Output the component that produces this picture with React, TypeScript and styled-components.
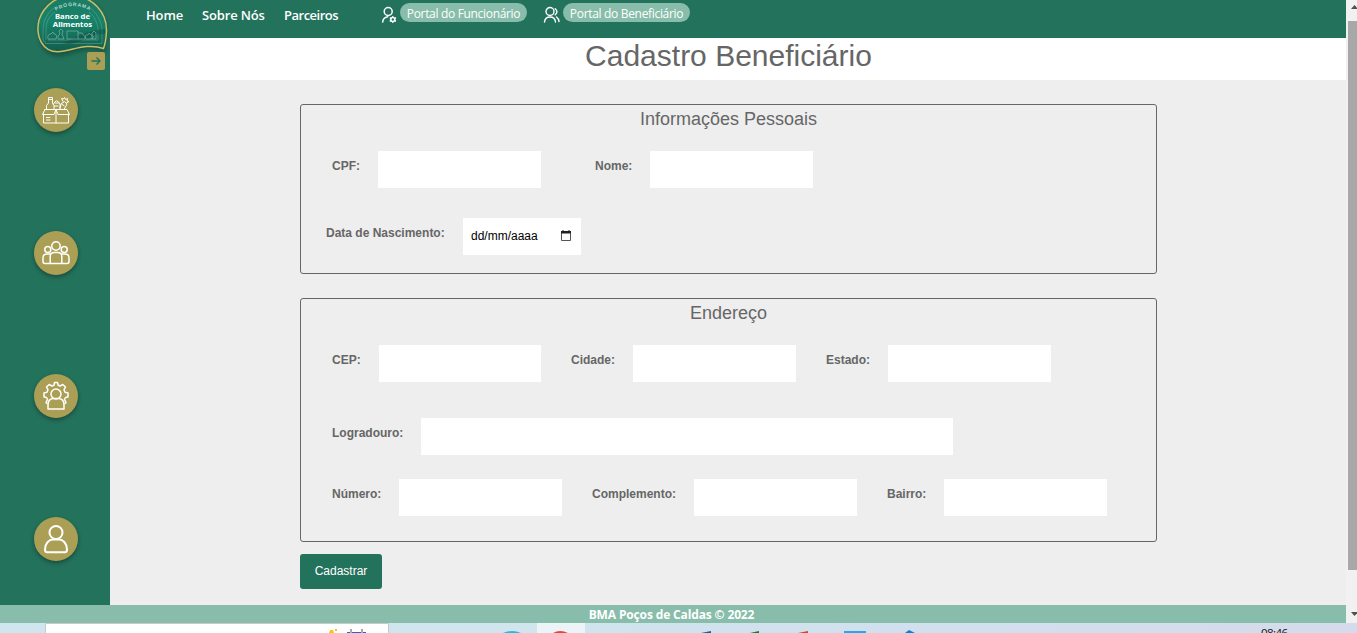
import React from 'react';
import styled, { createGlobalStyle } from 'styled-components';

const GlobalStyle = createGlobalStyle`
  * { box-sizing: border-box; }
  html, body { margin: 0; padding: 0; overflow: hidden; }
  body { font-family: "Liberation Sans", Arial, sans-serif; background: #eee; }
`;

const Screen = styled.div`
  display: flex;
  flex-direction: column;
  width: 1357px;
  height: 633px;
  overflow: hidden;
`;
const Viewport = styled.div`
  display: flex;
  height: 623px;
`;
const Site = styled.div`
  display: flex;
  flex-direction: column;
  width: 1346px;
`;
const Body = styled.div`
  display: flex;
  height: 605px;
`;

const Sidebar = styled.aside`
  width: 110px;
  height: 605px;
  background: #23725b;
  display: flex;
  flex-direction: column;
`;
const LogoBox = styled.div`
  height: 52px;
  padding-left: 32px;
  svg { display: block; overflow: visible; }
`;
const Toggle = styled.button`
  width: 18px;
  height: 18px;
  margin: 0 0 0 87px;
  padding: 0;
  border: 0;
  border-radius: 2px;
  background: #ab9f55;
  display: flex;
  align-items: center;
  justify-content: center;
`;
const SideMenu = styled.nav`
  display: flex;
  flex-direction: column;
  gap: 99px;
  padding: 18px 0 0 34px;
`;
const RoundButton = styled.a`
  width: 44px;
  height: 44px;
  border-radius: 50%;
  background: #ab9f55;
  box-shadow: 0 2px 4px rgba(0, 0, 0, 0.35);
  display: flex;
  align-items: center;
  justify-content: center;
`;

const Main = styled.main`
  width: 1236px;
  display: flex;
  flex-direction: column;
  background: #eee;
`;
const TopBar = styled.header`
  height: 38px;
  flex: none;
  background: #23725b;
  color: #fff;
  display: flex;
  align-items: flex-start;
  padding-left: 36px;
  font-family: "Open Sans", "Noto Sans", sans-serif;
`;
const NavLink = styled.a<{ $w: number; $ls?: number }>`
  width: ${p => p.$w}px;
  padding-top: 6px;
  font-size: 13px;
  line-height: 18px;
  font-weight: 600;
  letter-spacing: ${p => p.$ls ?? 0}px;
  white-space: nowrap;
`;
const Portal = styled.div<{ $gap: number }>`
  display: flex;
  margin-right: ${p => p.$gap}px;
  svg { margin-top: 6px; flex: none; }
`;
const Pill = styled.a`
  width: 127px;
  height: 19px;
  margin: 3px 0 0 3px;
  border-radius: 10px;
  background: #87bdaa;
  font-size: 12px;
  line-height: 21px;
  letter-spacing: -0.32px;
  text-align: center;
  white-space: nowrap;
`;
const PageTitle = styled.h1`
  height: 42px;
  flex: none;
  margin: 0;
  padding-left: 1px;
  background: #fff;
  color: #666;
  font-size: 30px;
  font-weight: 400;
  line-height: 36px;
  text-align: center;
`;
const Form = styled.form`
  width: 857px;
  margin: 24px 0 0 190px;
`;
const Card = styled.section<{ $h: number; $mb: number }>`
  height: ${p => p.$h}px;
  margin-bottom: ${p => p.$mb}px;
  border: 1px solid #666;
  border-radius: 3px;
`;
const CardTitle = styled.h2`
  margin: 0;
  height: 46px;
  color: #666;
  font-size: 18px;
  font-weight: 400;
  line-height: 28px;
  text-align: center;
`;
const Row = styled.div<{ $gap: number; $pad?: number; $mb: number }>`
  display: flex;
  gap: ${p => p.$gap}px;
  padding-left: ${p => p.$pad ?? 31}px;
  margin-bottom: ${p => p.$mb}px;
`;
const Field = styled.label<{ $label: number }>`
  display: grid;
  grid-template-columns: ${p => p.$label}px auto;
  color: #666;
  font-size: 12px;
  font-weight: 700;
  line-height: 30px;
  white-space: nowrap;
`;
const Input = styled.input<{ $w?: number }>`
  width: ${p => p.$w ?? 163}px;
  height: 37px;
  border: 0;
  padding: 8px;
  outline: 0;
  background: #fff;
`;
const DateInput = styled.span`
  width: 118px;
  height: 37px;
  padding: 0 10px 0 8px;
  background: #fff;
  color: #000;
  font-size: 12px;
  font-weight: 400;
  line-height: 37px;
  display: flex;
  align-items: center;
  justify-content: space-between;
  svg { margin-bottom: 2px; }
`;
const Submit = styled.button`
  width: 82px;
  height: 35px;
  border: 0;
  border-radius: 3px;
  padding: 0 0 2px 0;
  background: #23725b;
  color: #fff;
  font: 12px "Liberation Sans", Arial, sans-serif;
  display: block;
`;
const Footer = styled.footer`
  height: 18px;
  background: #87bdaa;
  color: #fff;
  font: 700 12px/20px "Open Sans", "Noto Sans", sans-serif;
  letter-spacing: -0.14px;
  text-align: center;
  padding-right: 3px;
`;

const ScrollTrack = styled.div`
  width: 11px;
  height: 623px;
  background: #f1f1f1;
  padding-left: 2px;
  display: flex;
  flex-direction: column;
`;
const ScrollArrow = styled.div<{ $h: number; $top: number }>`
  height: ${p => p.$h}px;
  padding: ${p => p.$top}px 0 0 3px;
  svg { display: block; }
`;
const Thumb = styled.div`
  height: 549px;
  background: #a8a8a8;
`;

const Taskbar = styled.div`
  height: 10px;
  display: flex;
  background: linear-gradient(90deg, #cfe6ee 0%, #d0e5ed 40%, #d1e0ee 65%, #d5dbeb 100%);
  svg { display: block; }
`;

const Logo = () => (
  <svg width="80" height="62" viewBox="32 0 80 62">
    <defs>
      <linearGradient id="badge" x1="0" x2="0" y1="0" y2="1">
        <stop offset="0" stopColor="#1c7b64" />
        <stop offset=".45" stopColor="#16836a" />
        <stop offset="1" stopColor="#135d4c" />
      </linearGradient>
      <filter id="soft" x="-20%" y="-20%" width="140%" height="150%">
        <feGaussianBlur stdDeviation="2" />
      </filter>
      <path id="arc" d="M54 12Q73 0 92 12" />
    </defs>
    <path d="M39 22C44 7 57 -2 72 -2C93 -2 107 14 107 33L105 53C88 45 74 54 60 56C44 57 37 42 39 22Z" fill="#0a3d30" opacity=".6" filter="url(#soft)" />
    <path d="M39 20C44 5 57 -4 72 -4C93 -4 107 13 106.500 31Q106 42 103.500 48.500C87 43 74 50 58 51.800C43 52 35 37 39 20Z" fill="url(#badge)" stroke="#cdbd62" strokeWidth="1.500" />
    <path d="M45 43.500H102V29C101 20 96 12 90 8M54 8C47 13 43 21 43 31V39Q43 42 46 42M48 40H98V29C97 21 94 16 89 12M55 12C49 16 46 22 46 30V40" fill="none" stroke="#79b5a2" strokeWidth=".7" opacity=".6" />
    <path d="M62 43C76 39 80 32 105 29V34C92 34 83 42 70 44Z" fill="#0e4c3f" opacity=".45" />
    <path d="M48 39q-1-5 3-5l2-2 1 2q4 0 2 5zM58 39v-3l2-2-1-3 2-2 2 2-1 3 2 5zM67 31h11v8H67zM78 33h4l3 4v2h-7M86 39q-2-5 2-4l1-2 2 2q4 0 1 4zM92 39v-6l2-2 2 2v6z" fill="none" stroke="#8fc4b4" strokeWidth=".7" opacity=".8" />
    <text fontFamily="Liberation Sans" fontSize="5" fontWeight="700" fill="#b7d8cd" letterSpacing=".8">
      <textPath href="#arc" startOffset="50%" textAnchor="middle">PROGRAMA</textPath>
    </text>
    <g fontFamily="Noto Sans" fontWeight="700" fill="#fff" textAnchor="middle">
      <text x="72.500" y="18.700" fontSize="7.800" textLength="35" lengthAdjust="spacingAndGlyphs">Banco de</text>
      <text x="72.500" y="27" fontSize="7.800" textLength="39.500" lengthAdjust="spacingAndGlyphs">Alimentos</text>
    </g>
  </svg>
);

const line = { fill: 'none', stroke: '#fff', strokeLinecap: 'round', strokeLinejoin: 'round' } as const;

const BoxIcon = () => (
  <svg width="30" height="30" viewBox="0 0 30 30" {...line} strokeWidth="1">
    <path d="M2.500 19v9h25v-9M4 14.500h22l2.500 5H17l-2-5-2 5H1.500l2.500-5M15 14.500V28M5.500 22.500H9M5.500 25H9" />
    <path d="M5.500 14v-3.500L7.500 8V2.500h4V8l1.500 2.500V14M7.500 4.500h4M12.500 9q3-6.500 6.500 0v5M14.500 8h3M13.500 11h3.500M19 13l1-4 3.500-2.500L26 9l-3 5.500M22 6.500L20.500 3.500l2 .5 1-1.500 1 2 2-1-.5 2.500 2 .5-2.500 1.500M21 9.500l2 1" />
  </svg>
);
const PeopleIcon = () => (
  <svg width="30" height="30" viewBox="0 0 30 30" {...line} strokeWidth="1.500">
    <circle cx="15" cy="8" r="4.200" />
    <circle cx="6.800" cy="11.500" r="3" />
    <circle cx="23.200" cy="11.500" r="3" />
    <path d="M9.200 25.500V18.500q0-4 4-4h3.600q4 0 4 4v7zM9 16H6Q2 16 2 20v3.500q0 2 2 2h5.200M21 16h3q4 0 4 4v3.500q0 2-2 2h-5.200" />
  </svg>
);
const GearUserIcon = () => (
  <svg width="30" height="30" viewBox="0 0 30 30" {...line} strokeWidth="1.500">
    <path d="M6 22.500l-1-1 1.500-3-1-2L3 16v-4l3-.7 1-2.500L5.500 6l2.700-2.500L11 5l2-.8.500-2.700h3l.7 2.700L19 5l2.800-1.500L24.500 6 23 8.800l1 2.500 3 .7v4l-2.500.500-1 2 1.500 3-1 1" />
    <circle cx="15" cy="13" r="5" />
    <path d="M7 28v-4q0-6 5-6.500h6q5 .5 5 6.500v4z" />
  </svg>
);
const UserIcon = () => (
  <svg width="30" height="30" viewBox="0 0 30 30" {...line} strokeWidth="2">
    <circle cx="15" cy="8.500" r="6.500" />
    <path d="M4 25.500C4 19.500 8 15.500 12 15.500h6c4 0 8 4 8 10q0 2.800-2 2.800H6q-2 0-2-2.800z" />
  </svg>
);
const StaffIcon = () => (
  <svg width="16" height="18" viewBox="0 0 16 18" {...line} strokeWidth="1.500">
    <circle cx="7.200" cy="5.500" r="4" />
    <path d="M1.700 16q.3-4.500 5-5.300" />
    <circle cx="11.800" cy="13.500" r="2" />
    <path d="M11.800 10.700v.5M11.800 15.800v.5M9.300 12.100l.5.300M13.900 14.700l.5.300M9.300 15l.5-.3M13.900 12.300l.5-.3" />
  </svg>
);
const PairIcon = () => (
  <svg width="17" height="18" viewBox="0 0 17 18" {...line} strokeWidth="1.400">
    <circle cx="7" cy="5.500" r="4" />
    <path d="M1.500 16q.5-5 5.500-5t5.500 5M12.200 2.800q3.500 3 0 6M13.500 11q2.200 1.500 2.500 4.500" />
  </svg>
);

export default function App() {
  return (
    <Screen>
      <GlobalStyle />
      <Viewport>
        <Site>
          <Body>
            <Sidebar>
              <LogoBox><Logo /></LogoBox>
              <Toggle type="button" aria-label="Abrir menu">
                <svg width="10" height="10" viewBox="0 0 10 10" fill="none" stroke="#23725b" strokeWidth="1.400">
                  <path d="M.5 5h8.500M5.500 1.500L9 5 5.500 8.500" />
                </svg>
              </Toggle>
              <SideMenu>
                <RoundButton><BoxIcon /></RoundButton>
                <RoundButton><PeopleIcon /></RoundButton>
                <RoundButton><GearUserIcon /></RoundButton>
                <RoundButton><UserIcon /></RoundButton>
              </SideMenu>
            </Sidebar>
            <Main>
              <TopBar>
                <NavLink $w={56} $ls={-0.15}>Home</NavLink>
                <NavLink $w={82} $ls={-0.15}>Sobre Nós</NavLink>
                <NavLink $w={97} $ls={-0.5}>Parceiros</NavLink>
                <Portal $gap={16}><StaffIcon /><Pill>Portal do Funcionário</Pill></Portal>
                <Portal $gap={0}><PairIcon /><Pill>Portal do Beneficiário</Pill></Portal>
              </TopBar>
              <PageTitle>Cadastro Beneficiário</PageTitle>
              <Form>
                <Card $h={170} $mb={24}>
                  <CardTitle>Informações Pessoais</CardTitle>
                  <Row $gap={54} $mb={30}>
                    <Field $label={46}>CPF:<Input /></Field>
                    <Field $label={55}>Nome:<Input /></Field>
                  </Row>
                  <Row $gap={0} $pad={25} $mb={0}>
                    <Field $label={137}>Data de Nascimento:
                      <DateInput>
                        dd/mm/aaaa
                        <svg width="10" height="11" viewBox="0 0 10 11">
                          <path d="M.5 2.500h9v8h-9z" fill="none" stroke="#555" />
                          <path d="M0 1h10v2.500H0zM1.500 0h1v2h-1zM7.500 0h1v2h-1z" fill="#222" />
                        </svg>
                      </DateInput>
                    </Field>
                  </Row>
                </Card>
                <Card $h={244} $mb={12}>
                  <CardTitle>Endereço</CardTitle>
                  <Row $gap={30} $mb={36}>
                    <Field $label={47}>CEP:<Input $w={162} /></Field>
                    <Field $label={62}>Cidade:<Input /></Field>
                    <Field $label={62}>Estado:<Input /></Field>
                  </Row>
                  <Row $gap={30} $mb={24}>
                    <Field $label={89}>Logradouro:<Input $w={532} /></Field>
                  </Row>
                  <Row $gap={30} $mb={0}>
                    <Field $label={67}>Número:<Input /></Field>
                    <Field $label={102}>Complemento:<Input /></Field>
                    <Field $label={57}>Bairro:<Input /></Field>
                  </Row>
                </Card>
                <Submit type="button">Cadastrar</Submit>
              </Form>
            </Main>
          </Body>
          <Footer>BMA Poços de Caldas © 2022</Footer>
        </Site>
        <ScrollTrack>
          <ScrollArrow $h={21} $top={5}>
            <svg width="6" height="4" viewBox="0 0 6 4"><path d="M0 4L3.500 0 7 4z" fill="#505050" /></svg>
          </ScrollArrow>
          <Thumb />
          <ScrollArrow $h={53} $top={42}>
            <svg width="6" height="4" viewBox="0 0 6 4"><path d="M0 0L3.500 4 7 0z" fill="#505050" /></svg>
          </ScrollArrow>
        </ScrollTrack>
      </Viewport>
      <Taskbar>
        <svg width="1357" height="10" viewBox="0 0 1357 10">
          <path d="M45.500 11V.5h343V11" fill="#fff" stroke="#c8c8c8" />
          <path d="M329 10l1-3h3l1 3zM335 6h2v2h-2z" fill="#ffc20e" />
          <path d="M347 9h19v1h-19z" fill="#3d5bd0" />
          <path d="M350 6h2v4h-2zM361 6h2v4h-2z" fill="#aaa" />
          <path d="M537 0h48v10h-48z" fill="#edf4f8" />
          <path d="M503 10q9-4 18 0z" fill="#20bcd8" />
          <path d="M553 10q7-4 15 0z" fill="#ea4335" />
          <path d="M701 10l10-2v2z" fill="#2b579a" />
          <path d="M750 10l9-2v2z" fill="#217346" />
          <path d="M798 10l10-2v2z" fill="#d24726" />
          <path d="M844 8h22v2h-22z" fill="#28a8ea" />
          <path d="M905 10l4-3 6 3z" fill="#0f80d0" />
          <text x="1261" y="14" fontFamily="Open Sans" fontSize="11.500" textLength="27" fill="#111">08:46</text>
        </svg>
      </Taskbar>
    </Screen>
  );
}
